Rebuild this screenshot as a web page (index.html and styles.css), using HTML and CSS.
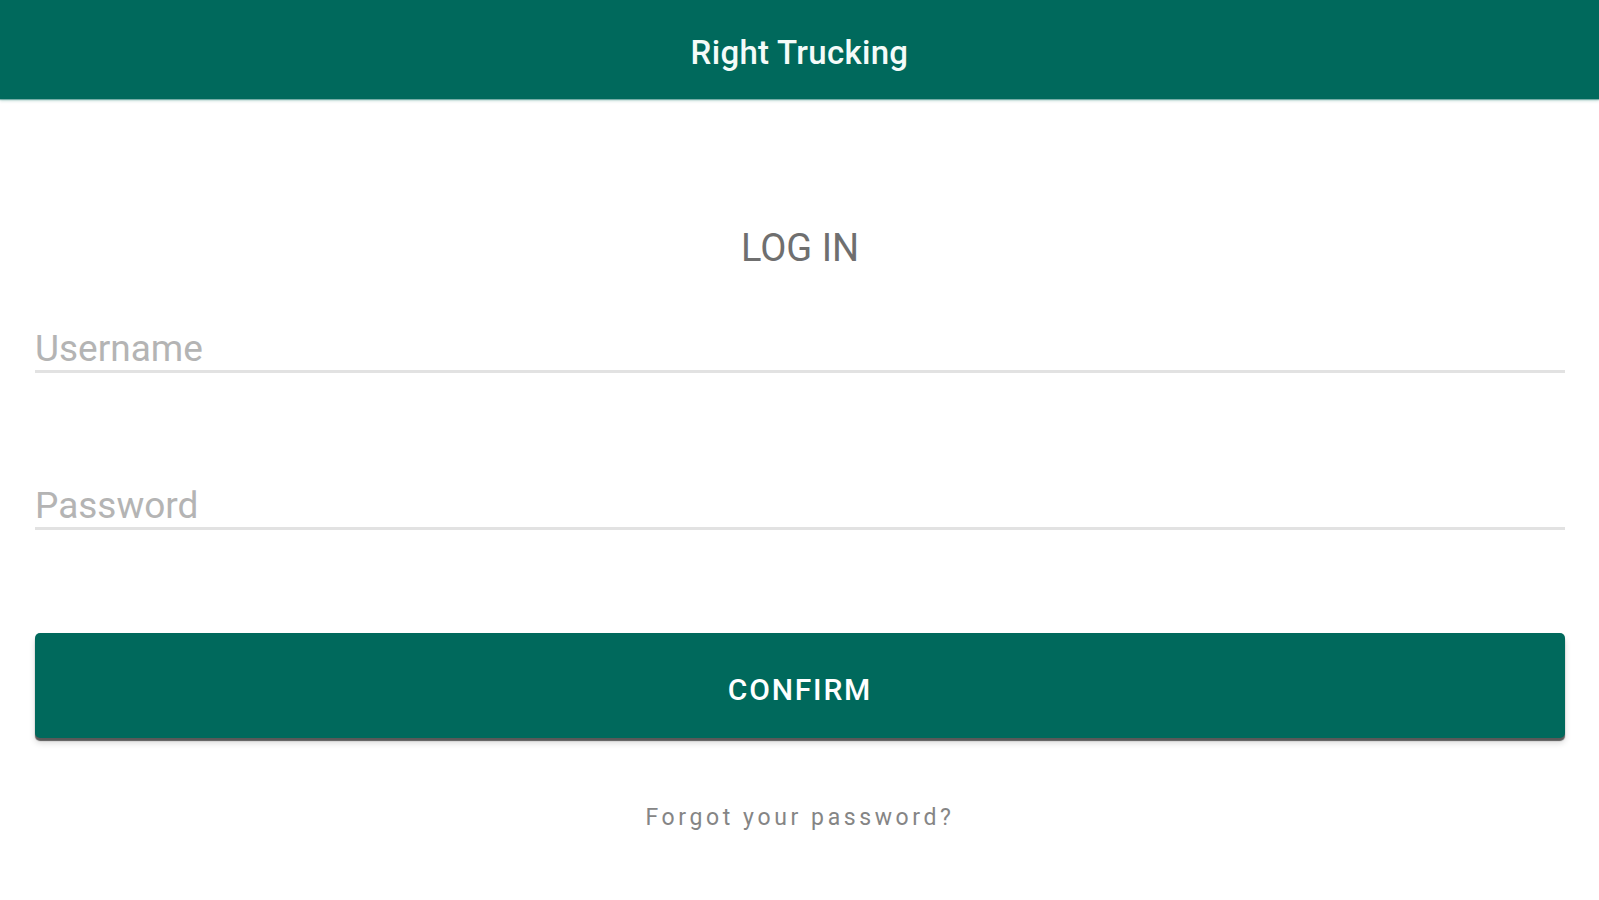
FILE: index.html
```html
<!DOCTYPE html>
<html lang="en">
<head>
<meta charset="utf-8">
<title>Right Trucking</title>
<link rel="stylesheet" href="styles.css">
</head>
<body>
<header class="app-bar">
  <h1 class="app-title">Right Trucking</h1>
</header>
<main class="login">
  <h2 class="login-title">LOG IN</h2>
  <div class="field">
    <input class="field-input" type="text" placeholder="Username">
  </div>
  <div class="field field-password">
    <input class="field-input" type="password" placeholder="Password">
  </div>
  <button class="confirm-btn" type="button">CONFIRM</button>
  <a class="forgot" href="#">Forgot your password?</a>
</main>
</body>
</html>
```

FILE: styles.css
```css
* { box-sizing: border-box; }

html, body {
  margin: 0;
  padding: 0;
  background: #ffffff;
  font-family: Roboto, "Noto Sans", "Liberation Sans", sans-serif;
}

.app-bar {
  height: 99px;
  background: #00695c;
  display: flex;
  align-items: center;
  justify-content: center;
  padding-top: 6px;
  box-shadow: 0 1px 1px rgba(0, 105, 92, 0.45), 0 2px 3px rgba(0, 105, 92, 0.2);
}

.app-title {
  margin: 0;
  color: #f4fbf9;
  font-size: 33px;
  font-weight: 500;
  letter-spacing: 0.3px;
  line-height: 40px;
}

.login {
  display: flex;
  flex-direction: column;
  padding: 0 34px 0 35px;
}

.login-title {
  margin: 127px 0 0;
  text-align: center;
  font-size: 38px;
  font-weight: 400;
  line-height: 44px;
  color: #6f6f6f;
}

.field {
  margin-top: 58px;
  border-bottom: 3px solid #e2e2e2;
}

.field-password {
  margin-top: 112px;
}

.field-input {
  display: block;
  width: 100%;
  height: 42px;
  padding: 0;
  border: 0;
  outline: none;
  background: transparent;
  font-family: Roboto, "Noto Sans", "Liberation Sans", sans-serif;
  font-size: 37px;
  line-height: 42px;
  color: #333333;
}

.field-input::placeholder {
  color: #b4b4b4;
}

.confirm-btn {
  margin-top: 103px;
  height: 105px;
  border: 0;
  border-radius: 5px;
  background: #00695c;
  color: #ffffff;
  font-family: Roboto, "Noto Sans", "Liberation Sans", sans-serif;
  font-size: 30px;
  font-weight: 500;
  letter-spacing: 0.06em;
  line-height: 36px;
  padding: 8px 0 0;
  display: flex;
  align-items: center;
  justify-content: center;
  box-shadow: 0 3px 1px rgba(0, 0, 0, 0.6), 0 5px 6px rgba(0, 0, 0, 0.15);
}

.forgot {
  margin-top: 65px;
  align-self: center;
  font-size: 23px;
  font-weight: 400;
  line-height: 30px;
  letter-spacing: 3.6px;
  color: #858585;
  text-decoration: none;
}
```
